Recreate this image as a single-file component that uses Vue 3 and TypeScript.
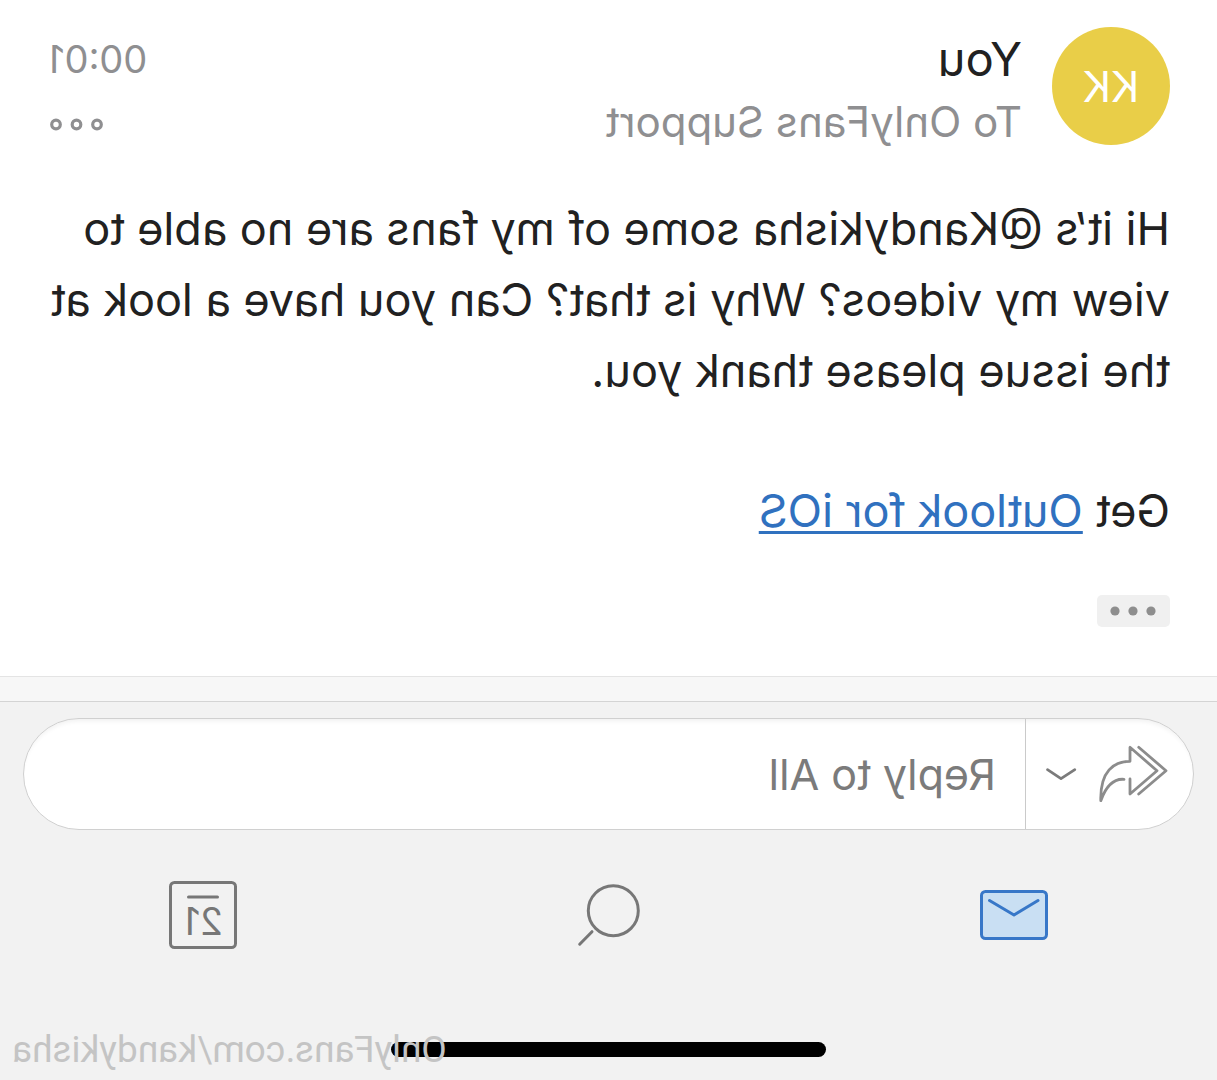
<script setup lang="ts">
import { ref } from 'vue'

interface Message {
  initials: string
  sender: string
  recipient: string
  time: string
  body: string
}

const message: Message = {
  initials: 'KK',
  sender: 'You',
  recipient: 'To OnlyFans Support',
  time: '00:01',
  body: 'Hi it’s @Kandykisha some of my fans are no able to view my videos? Why is that? Can you have a look at the issue please thank you.',
}

const reply = ref('')
const day = 21
</script>

<template>
  <div class="screen">
    <main class="message">
      <header class="head">
        <div class="avatar">{{ message.initials }}</div>
        <div class="people">
          <h1 class="sender">{{ message.sender }}</h1>
          <p class="recipient">{{ message.recipient }}</p>
        </div>
        <div class="meta">
          <time class="time">{{ message.time }}</time>
          <button class="plain" type="button" aria-label="Message options">
            <svg class="block" width="54" height="14" viewBox="0 0 54 14" fill="none" stroke="#8f8f91" stroke-width="3.2">
              <circle cx="6" cy="7.5" r="4.3" />
              <circle cx="26.5" cy="7.5" r="4.3" />
              <circle cx="47" cy="7.5" r="4.3" />
            </svg>
          </button>
        </div>
      </header>

      <p class="body">{{ message.body }}</p>
      <p class="body signature">Get <a href="#">Outlook for iOS</a></p>

      <button class="quoted" type="button" aria-label="Show quoted text">
        <svg class="block" width="46" height="10" viewBox="0 0 46 10" fill="#8e8e8e">
          <circle cx="5" cy="5" r="4.6" />
          <circle cx="23" cy="5" r="4.6" />
          <circle cx="41" cy="5" r="4.6" />
        </svg>
      </button>
    </main>

    <div class="band"></div>

    <footer class="dock">
      <form class="reply" @submit.prevent>
        <div class="mode">
          <button class="plain" type="button" aria-label="Reply to all">
            <svg class="block" width="72" height="60" viewBox="0 0 72 60" fill="none" stroke="#8c8c8c" stroke-width="2.8" stroke-linecap="round" stroke-linejoin="round">
              <path d="M39 35V50L12 26.7L39 3.3V17.3C55 17.3 69 27 68.2 56.7C63 42 55 34.5 45 35.3" />
              <path d="M30.3 3.3L3 26.7L30.3 50" />
            </svg>
          </button>
          <button class="plain" type="button" aria-label="Choose reply mode">
            <svg class="block" width="32" height="14" viewBox="0 0 32 14" fill="none" stroke="#7b7b7b" stroke-width="2.8" stroke-linecap="round" stroke-linejoin="round">
              <path d="M2.2 2.7L16 11.7L29.5 2.7" />
            </svg>
          </button>
        </div>
        <input v-model="reply" class="field" type="text" placeholder="Reply to All" aria-label="Reply to All" />
      </form>

      <nav class="tabs">
        <button class="plain" type="button" aria-label="Mail">
          <svg class="block" width="68" height="68" viewBox="0 0 68 68" fill="none" stroke="#3777c8" stroke-width="3" stroke-linecap="round" stroke-linejoin="round">
            <rect x="1.5" y="10.5" width="65" height="47" rx="4" fill="#c9dff3" />
            <path d="M10 19.5L34 34L58.5 19.5" />
          </svg>
        </button>
        <button class="plain" type="button" aria-label="Search">
          <svg class="block" width="72" height="68" viewBox="0 0 72 68" fill="none" stroke="#777" stroke-width="3" stroke-linecap="round">
            <circle cx="31.7" cy="29.7" r="25" />
            <path d="M53 50.7L65.3 63.2" />
          </svg>
        </button>
        <button class="plain" type="button" aria-label="Calendar">
          <svg class="block" width="68" height="68" viewBox="0 0 68 68">
            <rect x="1.5" y="1.5" width="65" height="65" rx="4" fill="none" stroke="#777" stroke-width="3" />
            <path d="M19.5 16H48.5" stroke="#777" stroke-width="3" stroke-linecap="round" />
            <text class="day" x="33" y="54" text-anchor="middle">{{ day }}</text>
          </svg>
        </button>
      </nav>

      <div class="indicator"></div>
      <div class="watermark">OnlyFans.com/kandykisha</div>
    </footer>
  </div>
</template>

<style>
body {
  margin: 0;
  background: #f2f2f2;
}
</style>

<style scoped>
/* The whole view is shown as a front-camera style mirror image. */
.screen {
  display: flex;
  flex-direction: column;
  min-height: 100vh;
  background: #fff;
  color: #212121;
  font-family: Inter, "Liberation Sans", sans-serif;
  transform: scaleX(-1);
}

.block {
  display: block;
}

.plain {
  padding: 0;
  border: 0;
  background: none;
  font-family: inherit;
}

.message {
  padding: 27px 47px 49px;
}

.head {
  display: flex;
  gap: 30px;
}

.avatar {
  display: flex;
  align-items: center;
  justify-content: center;
  width: 118px;
  height: 118px;
  border-radius: 50%;
  background: #e9ce48;
  color: #fff;
  font-size: 42px;
}

.people {
  flex: 1;
}

.sender {
  margin: 0;
  font-size: 47px;
  font-weight: 400;
  line-height: 64px;
}

.recipient {
  margin: 0;
  color: #8f8f91;
  font-size: 42px;
  line-height: 62px;
}

.meta {
  display: flex;
  flex-direction: column;
  align-items: flex-end;
  gap: 26px;
  padding-right: 2px;
}

.time {
  color: #8f8f91;
  font-size: 38px;
  line-height: 64px;
}

.body {
  margin: 40px 0 0;
  font-size: 45px;
  line-height: 71px;
}

.signature {
  margin-top: 69px;
}

.signature a {
  color: #3071bf;
  text-decoration-thickness: 3px;
  text-underline-offset: 4px;
}

.quoted {
  display: flex;
  align-items: center;
  justify-content: center;
  width: 73px;
  height: 32px;
  margin-top: 49px;
  padding: 0;
  border: 0;
  border-radius: 5px;
  background: #f0f0f0;
}

.band {
  height: 24px;
  border-top: 1px solid #e4e4e4;
  border-bottom: 1px solid #d4d4d4;
  background: #f7f7f7;
}

.dock {
  position: relative;
  display: flex;
  flex: 1;
  flex-direction: column;
  background: #f2f2f2;
}

.reply {
  display: flex;
  height: 110px;
  margin: 16px 23px 0;
  overflow: hidden;
  border: 1px solid #d0d0d0;
  border-radius: 56px;
  background: #fff;
  box-shadow: inset 0 5px 5px -3px #f0f0f0;
}

.mode {
  display: flex;
  align-items: center;
  gap: 20px;
  padding: 0 19px 0 24px;
  border-right: 1px solid #cacaca;
}

.field {
  flex: 1;
  min-width: 0;
  padding: 0 29px;
  border: 0;
  outline: 0;
  background: none;
  color: #212121;
  font-family: inherit;
  font-size: 43px;
}

.field::placeholder {
  color: #7b7b7b;
  opacity: 1;
}

.tabs {
  display: grid;
  grid-template-columns: repeat(3, 1fr);
  justify-items: center;
  margin-top: 51px;
}

.day {
  fill: #777;
  font-size: 38px;
}

.indicator {
  width: 435px;
  height: 15px;
  margin: auto auto 23px;
  border-radius: 8px;
  background: #000;
}

.watermark {
  position: absolute;
  right: 12px;
  bottom: 8px;
  color: #c4c4c4;
  font-family: Roboto, "Liberation Sans", sans-serif;
  font-size: 37px;
  line-height: 44px;
}
</style>
